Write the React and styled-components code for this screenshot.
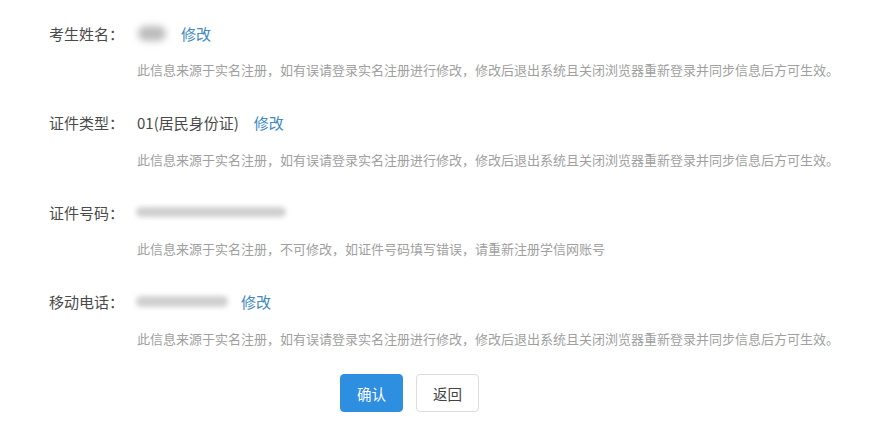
import React from "react";
import styled, { createGlobalStyle } from "styled-components";

const Global = createGlobalStyle`
  html, body { margin: 0; padding: 0; background: #fff; }
  body { font-family: "Noto Sans CJK SC", "Noto Sans", sans-serif; }
`;

const Page = styled.div`
  width: 883px;
  height: 429px;
  box-sizing: border-box;
  padding: 22px 0 0 49px;
  display: flex;
  flex-direction: column;
`;

const Field = styled.div`
  display: flex;
  flex-direction: column;
  gap: 17px;
  margin-bottom: 32.5px;
`;

const Line = styled.div`
  display: flex;
  align-items: center;
  height: 22px;
  font-size: 15px;
  color: #4a4a4a;
`;

const Label = styled.span`
  width: 88px;
  flex: none;
  white-space: nowrap;
`;

const Value = styled.span`
  white-space: nowrap;
  margin-right: 15px;
`;

const Blur = styled.span`
  display: inline-block;
  flex: none;
  width: ${(p) => p.$w}px;
  height: ${(p) => p.$h}px;
  margin-left: ${(p) => p.$ml || 0}px;
  margin-right: ${(p) => p.$mr || 0}px;
  border-radius: ${(p) => p.$h / 2}px;
  background: ${(p) => p.$c};
  filter: blur(${(p) => p.$b}px);
`;

const Link = styled.a`
  color: #4189c0;
  text-decoration: none;
  cursor: pointer;
  white-space: nowrap;
`;

const Hint = styled.div`
  height: 18px;
  line-height: 18px;
  padding-left: 88px;
  font-size: 13px;
  letter-spacing: 0;
  color: #a0a0a0;
  white-space: nowrap;
`;

const Buttons = styled.div`
  display: flex;
  gap: 13px;
  padding-left: 291px;
  margin-top: -6px;
`;

const Button = styled.button`
  width: 63px;
  height: 38px;
  box-sizing: border-box;
  border-radius: 4px;
  font-family: inherit;
  font-size: 14.5px;
  cursor: pointer;
  border: 1px solid ${(p) => (p.$primary ? "#2e8ee0" : "#dcdcdc")};
  background: ${(p) => (p.$primary ? "#2e8ee0" : "#fff")};
  color: ${(p) => (p.$primary ? "#fff" : "#444")};
  padding: 0;
`;

const HINT_A =
  "此信息来源于实名注册，如有误请登录实名注册进行修改，修改后退出系统且关闭浏览器重新登录并同步信息后方可生效。";
const HINT_B = "此信息来源于实名注册，不可修改，如证件号码填写错误，请重新注册学信网账号";

export default function App() {
  return (
    <>
      <Global />
      <Page>
        <Field>
          <Line>
            <Label>考生姓名：</Label>
            <Blur $w={28} $h={15} $ml={1} $mr={15} $c="#bdbdbd" $b={3.5} />
            <Link>修改</Link>
          </Line>
          <Hint>{HINT_A}</Hint>
        </Field>
        <Field>
          <Line>
            <Label>证件类型：</Label>
            <Value>01(居民身份证)</Value>
            <Link>修改</Link>
          </Line>
          <Hint>{HINT_A}</Hint>
        </Field>
        <Field>
          <Line>
            <Label>证件号码：</Label>
            <Blur $w={150} $h={10} $ml={-1} $c="#cfcfcf" $b={2.5} />
          </Line>
          <Hint>{HINT_B}</Hint>
        </Field>
        <Field>
          <Line>
            <Label>移动电话：</Label>
            <Blur $w={92} $h={11} $ml={-1} $mr={13} $c="#d0d0d0" $b={2.5} />
            <Link>修改</Link>
          </Line>
          <Hint>{HINT_A}</Hint>
        </Field>
        <Buttons>
          <Button $primary>确认</Button>
          <Button>返回</Button>
        </Buttons>
      </Page>
    </>
  );
}
